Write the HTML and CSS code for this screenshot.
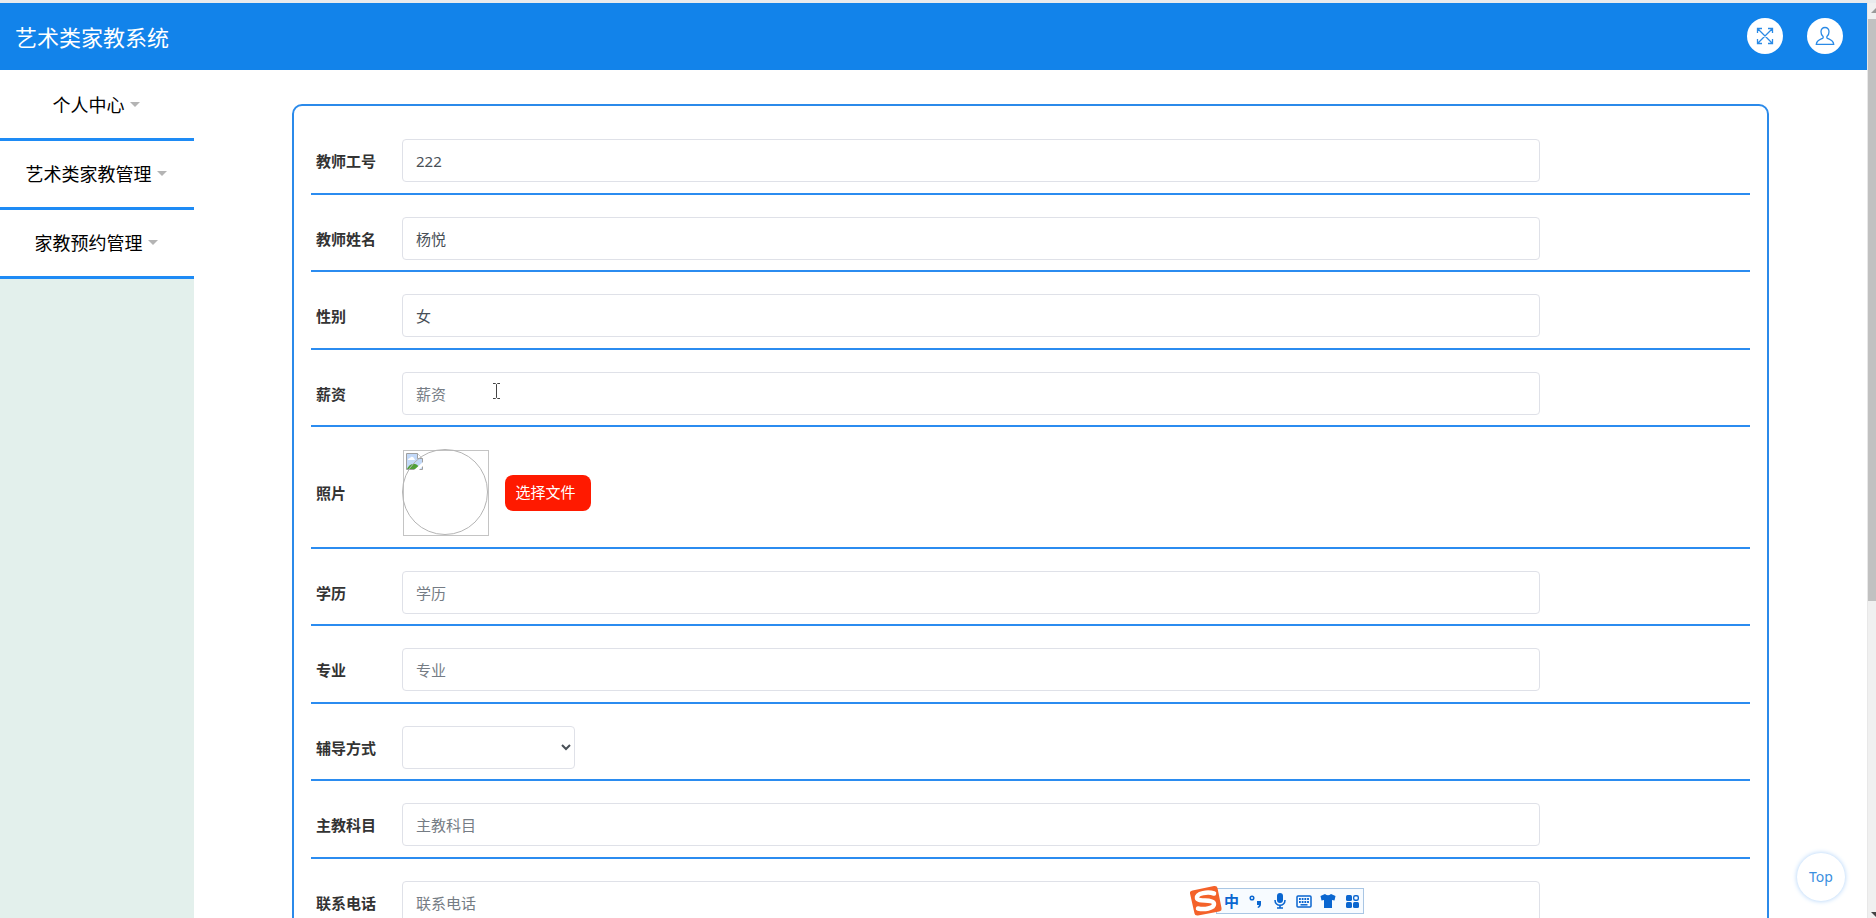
FILE: index.html
```html
<!DOCTYPE html>
<html lang="zh-CN">
  <head>
    <meta charset="UTF-8" />
    <meta name="viewport" content="width=device-width, initial-scale=1.0" />
    <title>艺术类家教系统</title>
    <link rel="stylesheet" href="styles.css">
  </head>
  <body>
    <div class="page">
      <header class="header">
        <h1>艺术类家教系统</h1>
        <div class="header-btns">
          <button type="button" class="round-btn" aria-label="全屏">
            <svg width="18" height="18" viewBox="0 0 18 18">
              <path d="M1.5 1.5l15 15M16.5 1.5l-15 15M1.5 6V1.5H6M12 1.5h4.5V6M16.5 12v4.5H12M6 16.5H1.5V12" />
            </svg>
          </button>
          <button type="button" class="round-btn" aria-label="个人中心">
            <svg width="20" height="20" viewBox="0 0 20 20">
              <path d="M10 1.5c-2.600 0-4 1.800-4 4.200 0 2.200.8 3.600 1.900 4.600.5.5.4 1.700-.4 2.100-2.600 1.200-5.800 1.800-6.200 5.900h17.400c-.4-4.100-3.600-4.700-6.200-5.900-.8-.4-.9-1.600-.4-2.100C13.200 9.300 14 7.900 14 5.700c0-2.400-1.400-4.200-4-4.200z" />
            </svg>
          </button>
        </div>
      </header>
      <div class="main">
        <nav class="sidebar">
          <ul>
            <li><a href="#">个人中心<i class="caret"></i></a></li>
            <li><a href="#">艺术类家教管理<i class="caret"></i></a></li>
            <li><a href="#">家教预约管理<i class="caret"></i></a></li>
          </ul>
        </nav>
        <div class="content">
          <form class="card">
            <div class="row">
              <label for="gonghao">教师工号</label>
              <div class="field"><input type="text" id="gonghao" placeholder="教师工号" value="222" /></div>
            </div>
            <div class="row">
              <label for="xingming">教师姓名</label>
              <div class="field"><input type="text" id="xingming" placeholder="教师姓名" value="杨悦" /></div>
            </div>
            <div class="row">
              <label for="xingbie">性别</label>
              <div class="field"><input type="text" id="xingbie" placeholder="性别" value="女" /></div>
            </div>
            <div class="row">
              <label for="xinzi">薪资</label>
              <div class="field">
                <input type="text" id="xinzi" placeholder="薪资" />
                <svg class="cursor" width="9" height="18" viewBox="0 0 9 18">
                  <path d="M1 1.5h2.5l1 1 1-1H8M4.5 2.5v13M1 16.5h2.5l1-1 1 1H8" />
                </svg>
              </div>
            </div>
            <div class="row">
              <label for="zhaopian">照片</label>
              <div class="field photo">
                <svg width="87" height="87" viewBox="0 0 87 87">
                  <rect x="1.5" y="1.5" width="85" height="85" fill="none" stroke="#c4c4c4" />
                  <path d="M4.5 4.5h11l5 5v11h-16z" fill="#c3d9f8" stroke="#a0a0a0" />
                  <path d="M6 11c0-2 3-2 3-3 2-1 3 1 4 3z" fill="#fff" />
                  <path d="M5 20c2-5 8-8 12-2l-3 2z" fill="#4f9f38" />
                  <path d="M12 21l9-8v4l-4 4z" fill="#fff" />
                  <path d="M15.5 4.5v5h5" fill="#fff" stroke="#a0a0a0" />
                  <circle cx="43" cy="43" r="42.500" fill="none" stroke="#b4b4b4" />
                </svg>
                <button type="button" class="file-btn" id="zhaopian">选择文件</button>
              </div>
            </div>
            <div class="row">
              <label for="xueli">学历</label>
              <div class="field"><input type="text" id="xueli" placeholder="学历" /></div>
            </div>
            <div class="row">
              <label for="zhuanye">专业</label>
              <div class="field"><input type="text" id="zhuanye" placeholder="专业" /></div>
            </div>
            <div class="row">
              <label for="fangshi">辅导方式</label>
              <div class="field"><select id="fangshi"><option></option></select></div>
            </div>
            <div class="row">
              <label for="kemu">主教科目</label>
              <div class="field"><input type="text" id="kemu" placeholder="主教科目" /></div>
            </div>
            <div class="row">
              <label for="dianhua">联系电话</label>
              <div class="field"><input type="text" id="dianhua" placeholder="联系电话" /></div>
            </div>
          </form>
        </div>
      </div>
    </div>
    <div class="scrollbar">
      <svg class="arrow-up" width="9" height="6" viewBox="0 0 9 6"><path d="M3 5l5-5 5 5z" /></svg>
      <div class="thumb"></div>
      <svg class="arrow-down" width="9" height="6" viewBox="0 0 9 6"><path d="M3 0l5 5 5-5z" /></svg>
    </div>
    <a href="#" class="back-top">Top</a>
    <div class="ime">
      <svg class="ime-logo" width="33" height="32" viewBox="0 0 33 32">
        <path d="M3.500 5.500L25 1q3-.5 3.500 2l4 20q.5 3-2.500 3.500L9 30.500q-3 .5-3.500-2L1 8.500q-.5-2.500 2.500-3z" fill="#f4622a" />
        <path d="M25 8.500C19 6.500 7.500 8 8 13c.5 4.500 17 .5 17 6 0 4.500-10 6-16 4.500" fill="none" stroke="#fff" stroke-width="4.500" stroke-linecap="round" />
      </svg>
      <div class="ime-bar">
        <span>中</span>
        <svg width="16" height="16" viewBox="0 0 16 16">
          <circle cx="4" cy="5" r="1.800" fill="none" stroke="#0a66d0" stroke-width="1.500" />
          <path d="M9 8h4v3q0 3-3 4l-.5-1q1.500-.8 1.500-2H9z" />
        </svg>
        <svg width="16" height="16" viewBox="0 0 16 16">
          <rect x="5" y="0" width="6" height="10" rx="3" />
          <path d="M3 7c0 7 10 7 10 0M8 12v3M5 15h6" fill="none" stroke="#0a66d0" stroke-width="1.600" />
        </svg>
        <svg width="16" height="16" viewBox="0 0 16 16">
          <rect x="1" y="3" width="14" height="11" rx="1" fill="none" stroke="#0a66d0" stroke-width="1.500" />
          <path d="M3 6h10M3 9h10" fill="none" stroke="#0a66d0" stroke-width="2" stroke-dasharray="1.800 .9" />
          <path d="M4.500 11.800h7" fill="none" stroke="#0a66d0" stroke-width="1.500" />
        </svg>
        <svg width="16" height="16" viewBox="0 0 16 16">
          <path d="M5 1q3 2.500 6 0l4.500 2-1 4.500L12 7v8H4V7l-2.500.5L.5 3z" />
        </svg>
        <svg width="16" height="16" viewBox="0 0 16 16">
          <rect x="2" y="2" width="6" height="6" rx="1.500" />
          <rect x="9.700" y="2.700" width="4.600" height="4.600" rx="1.500" fill="none" stroke="#0a66d0" stroke-width="1.400" />
          <rect x="2" y="9" width="6" height="6" rx="1.500" />
          <rect x="9" y="9" width="6" height="6" rx="1.500" />
        </svg>
      </div>
    </div>
  </body>
</html>
```

FILE: styles.css
```css
* {
  box-sizing: border-box;
}
body {
  margin: 0;
  height: 100vh;
  overflow: hidden;
  display: flex;
  position: relative;
  background-color: #fff;
  font-family: "Noto Sans", "Noto Sans CJK SC", sans-serif;
  font-size: 15px;
  color: #333;
}
.page {
  flex: 1;
  display: flex;
  flex-direction: column;
  border-top: 3px solid #e9ebed;
}
.header {
  display: flex;
  flex-shrink: 0;
  justify-content: space-between;
  align-items: center;
  height: 67px;
  padding: 0 24px 2px 15px;
  background-color: #1283ea;
}
.header h1 {
  margin: 0;
  font-size: 22px;
  font-weight: 400;
  color: #fff;
}
.header-btns {
  display: flex;
  gap: 24px;
}
.round-btn {
  display: flex;
  align-items: center;
  justify-content: center;
  width: 36px;
  height: 36px;
  padding: 0;
  border: none;
  border-radius: 50%;
  background-color: #fff;
  cursor: pointer;
}
.round-btn svg {
  fill: none;
  stroke: #2a8ae6;
  stroke-width: 1.3;
}
.main {
  flex: 1;
  display: flex;
  min-height: 0;
}
.sidebar {
  width: 194px;
  background-color: #e3f0ec;
}
.sidebar ul {
  list-style: none;
  margin: 0;
  padding: 2px 0 0;
  background-color: #fff;
}
.sidebar li {
  border-bottom: 3px solid #1e8bf5;
}
.sidebar a {
  display: flex;
  align-items: center;
  justify-content: center;
  gap: 5px;
  height: 66px;
  padding: 0 2px 2px 0;
  font-size: 18px;
  font-weight: 400;
  color: #000;
  text-decoration: none;
}
.caret {
  border: 5px solid transparent;
  border-top-color: #b4b4b4;
  border-bottom: none;
}
.content {
  flex: 1;
  padding: 34px 98px 0;
}
.card {
  padding: 11px 17px;
  border: 2px solid #2b8aea;
  border-radius: 10px;
}
.row {
  display: flex;
  align-items: center;
  padding: 22px 0 10px 5px;
  border-bottom: 2px solid #2b8cf0;
}
.row:nth-child(odd) {
  padding-bottom: 11px;
}
.row label {
  width: 86px;
  font-weight: 700;
}
.field {
  flex: 1;
  display: flex;
  position: relative;
  padding-right: 210px;
}
.field input {
  width: 100%;
}
.field input,
.field select {
  height: 43px;
  padding: 0 13px;
  border: 1px solid #dfe1e8;
  border-radius: 4px;
  background-color: #fff;
  font-family: inherit;
  font-size: 15px;
  color: #495057;
}
.field input::placeholder {
  color: #757c84;
}
.field select {
  width: 173px;
  padding: 0;
}
.cursor {
  position: absolute;
  left: 90px;
  top: 10px;
  fill: none;
  stroke: #444;
}
.photo {
  align-items: center;
  gap: 16px;
}
.file-btn {
  width: 86px;
  height: 36px;
  padding: 0 5px 2px 0;
  border: none;
  border-radius: 8px;
  background-color: #ff1a00;
  font-family: inherit;
  font-size: 15px;
  color: #fff;
  cursor: pointer;
}
.scrollbar {
  width: 9px;
  display: flex;
  flex-direction: column;
  border-top: 3px solid #e9ebed;
  border-left: 1px solid #e8e8e8;
  background-color: #f0f0f0;
}
.scrollbar svg {
  fill: #9a9a9a;
}
.arrow-up {
  margin: 5px 0;
}
.thumb {
  height: calc(64% - 4px);
  background-color: #c1c1c1;
}
.scrollbar .arrow-down {
  margin-top: auto;
  fill: #444;
}
.back-top {
  position: absolute;
  right: 31px;
  bottom: 17px;
  width: 48px;
  height: 48px;
  border-radius: 50%;
  background-color: #fff;
  box-shadow: 0 0 5px #a9cff8;
  font-size: 14px;
  line-height: 48px;
  text-align: center;
  color: #3a8fe0;
  text-decoration: none;
}
.ime {
  position: absolute;
  right: 512px;
  bottom: 1px;
  display: flex;
  align-items: center;
}
.ime-logo {
  margin-right: -6px;
  z-index: 1;
}
.ime-bar {
  display: flex;
  align-items: center;
  gap: 8px;
  height: 26px;
  padding: 0 3px 0 7px;
  border: 1px solid #a9c6e4;
  background-color: #f7fbff;
}
.ime-bar span {
  width: 16px;
  font-size: 15px;
  font-weight: 700;
  line-height: 16px;
  color: #0a66d0;
}
.ime-bar svg {
  fill: #0a66d0;
}
```
